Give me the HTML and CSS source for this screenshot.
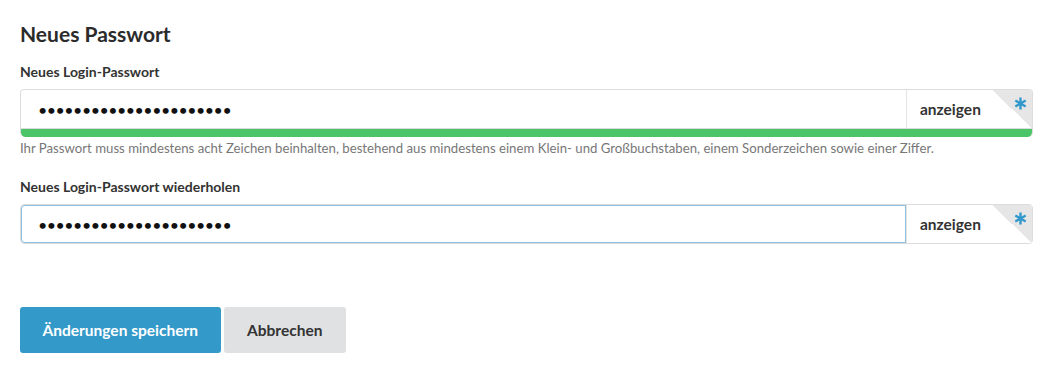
FILE: index.html
```html
<!DOCTYPE html>
<html lang="de">
<head>
    <meta charset="UTF-8">
    <meta name="viewport" content="width=device-width, initial-scale=1.0">
    <title>Neues Passwort</title>
    <link rel="stylesheet" href="styles.css">
</head>
<body>
    <form class="password-form" onsubmit="return false">
        <h2 class="form-title">Neues Passwort</h2>

        <div class="field">
            <label class="field-label" for="newPassword">Neues Login-Passwort</label>
            <div class="input-box has-meter">
                <div class="input-row">
                    <input class="pw-input" type="password" id="newPassword" value="geheimesPasswort2024!x">
                    <span class="addon">
                        <span class="addon-text">anzeigen</span>
                        <span class="required-corner">
                            <svg class="asterisk" width="13" height="13" viewBox="0 0 12 12">
                                <path d="M6 0.5V11.5M1.2 3.25L10.8 8.75M1.2 8.75L10.8 3.25" stroke="#3399cc" stroke-width="2.2"/>
                            </svg>
                        </span>
                    </span>
                </div>
                <div class="strength-meter"></div>
            </div>
            <p class="help-text">Ihr Passwort muss mindestens acht Zeichen beinhalten, bestehend aus mindestens einem Klein- und Großbuchstaben, einem Sonderzeichen sowie einer Ziffer.</p>
        </div>

        <div class="field">
            <label class="field-label" for="repeatPassword">Neues Login-Passwort wiederholen</label>
            <div class="input-box">
                <div class="input-row">
                    <input class="pw-input focused" type="password" id="repeatPassword" value="geheimesPasswort2024!x" autofocus>
                    <span class="addon">
                        <span class="addon-text">anzeigen</span>
                        <span class="required-corner">
                            <svg class="asterisk" width="13" height="13" viewBox="0 0 12 12">
                                <path d="M6 0.5V11.5M1.2 3.25L10.8 8.75M1.2 8.75L10.8 3.25" stroke="#3399cc" stroke-width="2.2"/>
                            </svg>
                        </span>
                    </span>
                </div>
            </div>
        </div>

        <div class="actions">
            <button type="submit" class="btn btn-primary">Änderungen speichern</button>
            <button type="button" class="btn btn-secondary">Abbrechen</button>
        </div>
    </form>
</body>
</html>
```
FILE: styles.css
```css
body {
    font-family: Lato, "Open Sans", sans-serif;
    background-color: #ffffff;
    color: #333;
    margin: 0;
    padding: 0;
}

.password-form {
    padding: 22px 20px 0 20px;
}

.form-title {
    font-size: 21px;
    font-weight: 700;
    line-height: 24px;
    margin: 0 0 17px 0;
    color: #2b2b2b;
}

.field-label {
    display: block;
    font-size: 14px;
    font-weight: 700;
    line-height: 18px;
    margin-bottom: 8px;
    color: #333;
}

.input-box {
    border: 1px solid #dcdcdc;
    border-radius: 4px;
    overflow: hidden;
}

.input-row {
    display: flex;
    height: 38px;
}

.pw-input {
    flex: 1;
    border: none;
    outline: none;
    padding: 0 0 0 17px;
    font-family: Lato, sans-serif;
    font-size: 16px;
    letter-spacing: -0.5px;
    color: #111;
    background: white;
}

.pw-input.focused {
    box-shadow: inset 0 0 0 1px #8cc0e0;
    border-radius: 4px 0 0 4px;
}

.addon {
    width: 125px;
    border-left: 1px solid #e4e4e4;
    display: flex;
    align-items: center;
    justify-content: space-between;
    background: white;
}

.addon-text {
    padding-left: 13px;
    font-size: 15.5px;
    font-weight: 700;
    color: #333;
}

.required-corner {
    position: relative;
    width: 40px;
    height: 38px;
    background: linear-gradient(to bottom left, #e6e6e6 50%, transparent 50%);
}

.asterisk {
    position: absolute;
    top: 7px;
    right: 5px;
}

.input-box.has-meter {
    border-bottom: none;
    border-radius: 4px 4px 5px 5px;
}

.has-meter .input-row {
    border-bottom: 1px solid #dcdcdc;
}

.strength-meter {
    height: 8px;
    background-color: #4cc569;
}

.help-text {
    font-size: 13.2px;
    color: #777;
    line-height: 16px;
    margin: 3px 0 22px 0;
}

.actions {
    display: flex;
    gap: 3px;
    margin-top: 63px;
}

.btn {
    height: 46px;
    font-family: Lato, sans-serif;
    font-size: 15.5px;
    font-weight: 700;
    border: none;
    border-radius: 3px;
    cursor: pointer;
    padding: 0 22.5px;
}

.btn-primary {
    background-color: #3399c9;
    color: white;
}

.btn-primary:hover {
    background-color: #2a86b3;
}

.btn-secondary {
    background-color: #e0e1e3;
    color: #333;
    padding: 0 23.5px;
}
```
